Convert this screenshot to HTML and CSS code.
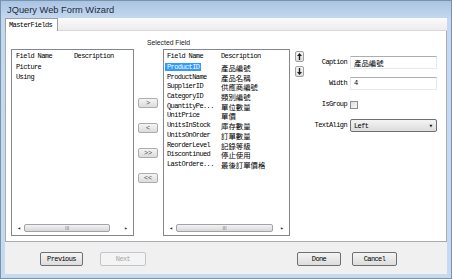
FILE: index.html
```html
<!DOCTYPE html>
<html lang="en">
<head>
    <meta charset="UTF-8">
    <title>JQuery Web Form Wizard</title>
    <link rel="stylesheet" href="styles.css">
</head>
<body>
    <div class="window">
        <div class="titlebar">JQuery Web Form Wizard</div>
        <div class="dialog">
            <div class="tabs">
                <div class="tab">MasterFields</div>
            </div>
            <div class="panel">
                <div class="selected-label">Selected Field</div>
                <div class="main">
                    <div class="list list-left">
                        <div class="row head"><span class="name">Field Name</span><span class="desc">Description</span></div>
                        <div class="row"><span class="name">Picture</span></div>
                        <div class="row"><span class="name">Using</span></div>
                        <div class="spacer"></div>
                        <div class="hscroll">
                            <span class="arrow">&#9666;</span>
                            <div class="track"><div class="thumb">III</div></div>
                            <span class="arrow">&#9656;</span>
                        </div>
                    </div>

                    <div class="move-buttons">
                        <button class="small-btn">&gt;</button>
                        <button class="small-btn">&lt;</button>
                        <button class="small-btn">&gt;&gt;</button>
                        <button class="small-btn">&lt;&lt;</button>
                    </div>

                    <div class="list list-right">
                        <div class="row head"><span class="name">Field Name</span><span class="desc">Description</span></div>
                        <div class="row"><span class="name"><span class="selected">ProductID</span></span><span class="desc">產品編號</span></div>
                        <div class="row"><span class="name">ProductName</span><span class="desc">產品名稱</span></div>
                        <div class="row"><span class="name">SupplierID</span><span class="desc">供應商編號</span></div>
                        <div class="row"><span class="name">CategoryID</span><span class="desc">類別編號</span></div>
                        <div class="row"><span class="name">QuantityPe...</span><span class="desc">單位數量</span></div>
                        <div class="row"><span class="name">UnitPrice</span><span class="desc">單價</span></div>
                        <div class="row"><span class="name">UnitsInStock</span><span class="desc">庫存數量</span></div>
                        <div class="row"><span class="name">UnitsOnOrder</span><span class="desc">訂單數量</span></div>
                        <div class="row"><span class="name">ReorderLevel</span><span class="desc">記錄等級</span></div>
                        <div class="row"><span class="name">Discontinued</span><span class="desc">停止使用</span></div>
                        <div class="row"><span class="name">LastOrdere...</span><span class="desc">最後訂單價格</span></div>
                        <div class="spacer"></div>
                        <div class="hscroll">
                            <span class="arrow">&#9666;</span>
                            <div class="track"><div class="thumb thumb-wide">III</div></div>
                            <span class="arrow">&#9656;</span>
                        </div>
                    </div>

                    <div class="order-buttons">
                        <button class="order-btn">
                            <svg width="5" height="7" viewBox="0 0 5 7"><path d="M2.5 0 L5 3 H3.2 V7 H1.8 V3 H0 Z" fill="#222"/></svg>
                        </button>
                        <button class="order-btn">
                            <svg width="5" height="7" viewBox="0 0 5 7"><path d="M2.5 7 L5 4 H3.2 V0 H1.8 V4 H0 Z" fill="#222"/></svg>
                        </button>
                    </div>

                    <div class="props">
                        <label class="prop-label">Caption</label>
                        <div class="text-input cjk">產品編號</div>
                        <label class="prop-label">Width</label>
                        <div class="text-input">4</div>
                        <label class="prop-label">IsGroup</label>
                        <div class="check-cell"><span class="checkbox"></span></div>
                        <label class="prop-label">TextAlign</label>
                        <div class="select"><span>Left</span><span class="caret">&#9662;</span></div>
                    </div>
                </div>
            </div>
            <div class="footer">
                <div class="footer-group">
                    <button class="btn btn-prev">Previous</button>
                    <button class="btn btn-next" disabled>Next</button>
                </div>
                <div class="footer-group right">
                    <button class="btn btn-done">Done</button>
                    <button class="btn btn-cancel">Cancel</button>
                </div>
            </div>
        </div>
    </div>
</body>
</html>
```

FILE: styles.css
```css
* {
    box-sizing: border-box;
}

body {
    margin: 0;
    font-family: "Liberation Sans", Arial, sans-serif;
    background: #c4d8ee;
}

.window {
    width: 452px;
    height: 279px;
    border: 1px solid #7a93ad;
    background: linear-gradient(to bottom, #a9c4e3 0px, #c4d9ef 18px, #c6daef 100%);
    display: flex;
    flex-direction: column;
    overflow: hidden;
}

.titlebar {
    height: 17px;
    padding-left: 6px;
    font-size: 9.3px;
    line-height: 18px;
    color: #1e2a3a;
}

/* dialog body */
.dialog {
    flex: 1;
    margin: 0 4px 4px 4px;
    background: #f0f0f0;
    display: flex;
    flex-direction: column;
}

.tabs {
    height: 13px;
    display: flex;
    background: linear-gradient(to bottom, #fbfbfb, #ececec);
    border-bottom: 1px solid #d9d9d9;
}

.tab {
    width: 53px;
    height: 14px;
    background: #fff;
    border: 1px solid #9aa0a8;
    border-bottom: none;
    font-family: "Liberation Mono", monospace;
    font-size: 7px;
    letter-spacing: -0.6px;
    line-height: 12px;
    padding-left: 3px;
    color: #000;
}

.panel {
    height: 211px;
    background: #fff;
    border: 1px solid #a8acb2;
    border-top: none;
    padding: 6px 6px 0 5px;
    display: flex;
    flex-direction: column;
}

.selected-label {
    height: 12px;
    line-height: 12px;
    padding-left: 136px;
    font-size: 6.8px;
    color: #222;
}

.main {
    height: 187px;
    display: flex;
}

/* list views */
.list {
    height: 187px;
    border: 1px solid #828790;
    display: flex;
    flex-direction: column;
    font-family: "Liberation Mono", monospace;
    font-size: 7px;
    letter-spacing: -0.6px;
    color: #000;
}

.list-left {
    width: 123px;
}

.list-right {
    width: 127px;
}

.row {
    height: 9.7px;
    line-height: 9.7px;
    display: flex;
    white-space: nowrap;
}

.row.head {
    height: 13px;
    line-height: 13px;
}

.list-left .name {
    width: 62px;
    padding-left: 4px;
}

.list-right .name {
    width: 57px;
    padding-left: 3px;
}

.list-right .row .desc {
    font-family: "Noto Sans CJK TC", sans-serif;
    font-size: 7.4px;
    letter-spacing: 0;
}

.list-right .row.head .desc {
    font-family: "Liberation Mono", monospace;
    font-size: 7px;
    letter-spacing: -0.6px;
}

.selected {
    background: #3399ff;
    color: #fff;
    padding: 0 2px;
    margin-left: -2px;
}

.spacer {
    flex: 1;
}

.hscroll {
    height: 8px;
    margin: 0 2px 3px 2px;
    display: flex;
    align-items: center;
    letter-spacing: 0;
}

.hscroll .arrow {
    width: 10px;
    text-align: center;
    font-size: 6px;
    color: #333;
}

.track {
    flex: 1;
    height: 8px;
}

.thumb {
    width: 89%;
    height: 8px;
    border: 1px solid #a3a3a3;
    border-radius: 2px;
    background: linear-gradient(to bottom, #f3f3f3, #d8d8d8);
    font-family: "Liberation Sans", sans-serif;
    font-size: 5px;
    line-height: 6px;
    text-align: center;
    color: #777;
}

.thumb-wide {
    width: 96%;
}

/* move buttons */
.move-buttons {
    width: 20px;
    margin: 0 5px 0 4px;
    padding-top: 49px;
    display: flex;
    flex-direction: column;
    gap: 15px;
}

.small-btn {
    width: 20px;
    height: 10px;
    padding: 0;
    border: 1px solid #acacac;
    border-radius: 2px;
    background: linear-gradient(to bottom, #f4f4f4, #dcdcdc);
    font-family: "Liberation Sans", sans-serif;
    font-size: 7px;
    line-height: 8px;
    color: #555;
}

.order-buttons {
    width: 9px;
    margin-left: 5px;
    padding-top: 2px;
    display: flex;
    flex-direction: column;
    gap: 4px;
}

.order-btn {
    width: 9px;
    height: 11px;
    padding: 0;
    border: 1px solid #a0a0a0;
    border-radius: 2px;
    background: linear-gradient(to bottom, #f6f6f6, #dedede);
    display: flex;
    align-items: center;
    justify-content: center;
}

/* properties */
.props {
    padding-top: 7px;
    display: grid;
    grid-template-columns: 43px 87px;
    grid-auto-rows: 13px;
    column-gap: 3px;
    row-gap: 8px;
    align-content: start;
}

.prop-label {
    font-family: "Liberation Mono", monospace;
    font-size: 7px;
    letter-spacing: -0.6px;
    line-height: 13px;
    text-align: right;
    color: #000;
}

.text-input {
    border: 1px solid #e3e9ef;
    border-top-color: #abadb3;
    background: #fff;
    padding-left: 3px;
    font-family: "Liberation Mono", monospace;
    font-size: 7px;
    line-height: 11px;
    color: #000;
}

.text-input.cjk {
    font-family: "Noto Sans CJK TC", sans-serif;
    font-size: 7.4px;
}

.check-cell {
    display: flex;
    align-items: center;
}

.checkbox {
    width: 8px;
    height: 8px;
    border: 1px solid #8f8f8f;
    background: linear-gradient(135deg, #dcdcdc, #f8f8f8);
}

.select {
    border: 1px solid #707070;
    border-radius: 2px;
    background: linear-gradient(to bottom, #f4f4f4, #dcdcdc);
    display: flex;
    justify-content: space-between;
    align-items: center;
    padding: 0 3px 0 3px;
    font-family: "Liberation Mono", monospace;
    font-size: 7px;
    letter-spacing: -0.6px;
    color: #000;
}

.caret {
    font-size: 7px;
    letter-spacing: 0;
    color: #111;
}

/* footer */
.footer {
    flex: 1;
    display: flex;
    justify-content: space-between;
    padding: 10px 50px 0 35px;
}

.footer-group {
    display: flex;
    gap: 17px;
}

.footer-group.right {
    gap: 11px;
}

.btn {
    height: 14px;
    padding: 0;
    border: 1px solid #707070;
    border-radius: 2px;
    background: linear-gradient(to bottom, #f4f4f4, #dddddd);
    font-family: "Liberation Mono", monospace;
    font-size: 7px;
    letter-spacing: -0.6px;
    color: #000;
}

.btn-prev {
    width: 43px;
}

.btn-next {
    width: 46px;
    border-color: #c2c6ca;
    background: #f4f4f4;
    color: #a8a8a8;
}

.btn-done {
    width: 44px;
}

.btn-cancel {
    width: 45px;
}
```
